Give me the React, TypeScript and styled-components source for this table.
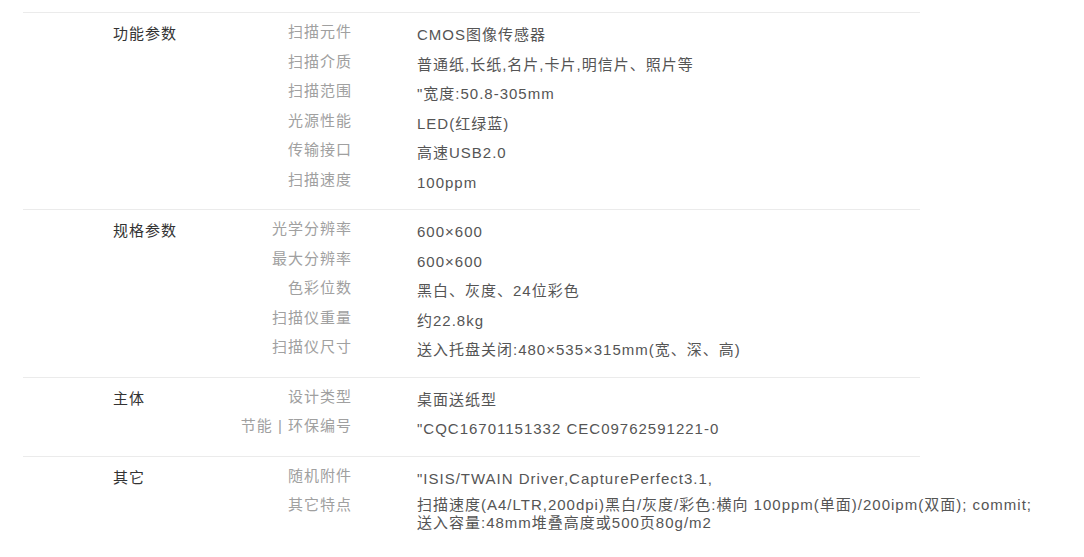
import React from "react";
import styled, { createGlobalStyle } from "styled-components";

const GlobalStyle = createGlobalStyle`
  html, body {
    margin: 0;
    padding: 0;
    background: #ffffff;
  }
  body {
    font-family: "Liberation Sans", "Noto Sans CJK SC", Arial, sans-serif;
    font-size: 15px;
    letter-spacing: 1px;
  }
`;

const Page = styled.div`
  width: 897px;
  margin: 12px 0 0 23px;
`;

const Group = styled.section`
  display: flex;
  border-top: 1px solid #ebebeb;
  padding: 10px 0 9px;
`;

const GroupTitle = styled.div`
  width: 70px;
  padding: 2px 0 0 90px;
  flex-shrink: 0;
  color: #333333;
  line-height: 18px;
`;

const Rows = styled.dl`
  flex: 1;
  margin: 0;
  display: flex;
  flex-direction: column;
`;

const Row = styled.div`
  display: flex;
  align-items: flex-start;
  line-height: 18px;
  margin-bottom: 8.5px;
`;

const Key = styled.dt`
  width: 169px;
  flex-shrink: 0;
  text-align: right;
  color: #a0a0a0;
`;

const Value = styled.dd<{ $multiline?: boolean }>`
  margin: 0 0 0 65px;
  padding-top: ${(p) => (p.$multiline ? "0" : "3px")};
  color: #555555;
  white-space: nowrap;
`;

type Spec = { key: string; value: React.ReactNode; multiline?: boolean };
type SpecGroup = { title: string; rows: Spec[] };

const groups: SpecGroup[] = [
  {
    title: "功能参数",
    rows: [
      { key: "扫描元件", value: "CMOS图像传感器" },
      { key: "扫描介质", value: "普通纸,长纸,名片,卡片,明信片、照片等" },
      { key: "扫描范围", value: "\"宽度:50.8-305mm" },
      { key: "光源性能", value: "LED(红绿蓝)" },
      { key: "传输接口", value: "高速USB2.0" },
      { key: "扫描速度", value: "100ppm" },
    ],
  },
  {
    title: "规格参数",
    rows: [
      { key: "光学分辨率", value: "600×600" },
      { key: "最大分辨率", value: "600×600" },
      { key: "色彩位数", value: "黑白、灰度、24位彩色" },
      { key: "扫描仪重量", value: "约22.8kg" },
      { key: "扫描仪尺寸", value: "送入托盘关闭:480×535×315mm(宽、深、高)" },
    ],
  },
  {
    title: "主体",
    rows: [
      { key: "设计类型", value: "桌面送纸型" },
      { key: "节能 | 环保编号", value: "\"CQC16701151332 CEC09762591221-0" },
    ],
  },
  {
    title: "其它",
    rows: [
      { key: "随机附件", value: "\"ISIS/TWAIN Driver,CapturePerfect3.1," },
      {
        key: "其它特点",
        multiline: true,
        value: (
          <>
            扫描速度(A4/LTR,200dpi)黑白/灰度/彩色:横向 100ppm(单面)/200ipm(双面); commit;
            <br />
            送入容量:48mm堆叠高度或500页80g/m2
          </>
        ),
      },
    ],
  },
];

export default function App() {
  return (
    <>
      <GlobalStyle />
      <Page>
        {groups.map((g) => (
          <Group key={g.title}>
            <GroupTitle>{g.title}</GroupTitle>
            <Rows>
              {g.rows.map((r) => (
                <Row key={r.key}>
                  <Key>{r.key}</Key>
                  <Value $multiline={r.multiline}>{r.value}</Value>
                </Row>
              ))}
            </Rows>
          </Group>
        ))}
      </Page>
    </>
  );
}
